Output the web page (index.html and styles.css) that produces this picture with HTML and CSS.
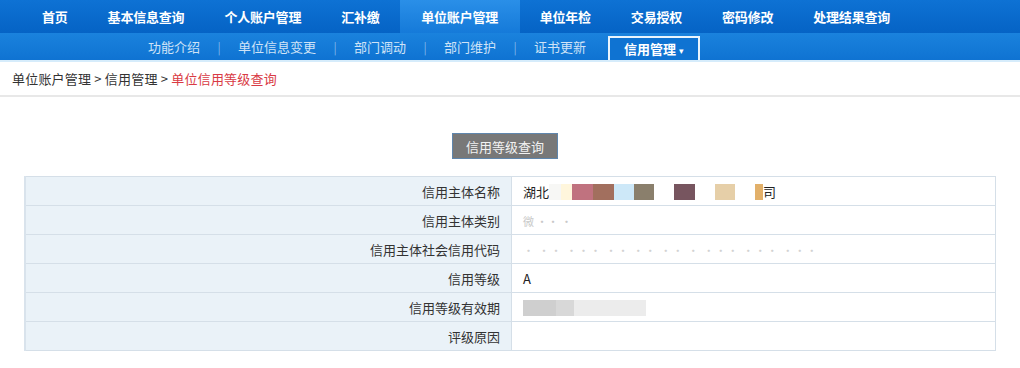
FILE: index.html
```html
<!DOCTYPE html>
<html lang="zh-CN">
<head>
  <meta charset="UTF-8">
  <title>单位信用等级查询</title>
  <link rel="stylesheet" href="styles.css">
</head>
<body>

<!-- Hauptnavigation -->
<div class="topnav">
  <a class="nav-item">首页</a>
  <a class="nav-item">基本信息查询</a>
  <a class="nav-item">个人账户管理</a>
  <a class="nav-item">汇补缴</a>
  <a class="nav-item nav-active">单位账户管理</a>
  <a class="nav-item">单位年检</a>
  <a class="nav-item">交易授权</a>
  <a class="nav-item">密码修改</a>
  <a class="nav-item">处理结果查询</a>
</div>

<!-- Unternavigation -->
<div class="subnav">
  <a class="sub-item">功能介绍</a><span class="sep">|</span>
  <a class="sub-item">单位信息变更</a><span class="sep">|</span>
  <a class="sub-item">部门调动</a><span class="sep">|</span>
  <a class="sub-item">部门维护</a><span class="sep">|</span>
  <a class="sub-item">证书更新</a>
  <a class="sub-item sub-active">信用管理 <span class="caret">▾</span></a>
</div>

<div class="crumbs">
  单位账户管理 &gt; 信用管理 &gt; <span class="crumb-current">单位信用等级查询</span>
</div>

<div class="content">
  <div class="actions">
    <button class="btn">信用等级查询</button>
  </div>

  <table class="info">
    <tr>
      <th>信用主体名称</th>
      <td>湖北<span class="blur b0"></span><span class="blur b1"></span><span class="blur b2"></span><span class="blur b3"></span><span class="blur b4"></span><span class="blur b5"></span><span class="gap"></span><span class="blur b6"></span><span class="gap"></span><span class="blur b7"></span><span class="gap"></span><span class="blur b8"></span>司</td>
    </tr>
    <tr>
      <th>信用主体类别</th>
      <td><span class="faint">微 ·· ·</span></td>
    </tr>
    <tr>
      <th>信用主体社会信用代码</th>
      <td><span class="faint faint-code">· ·· ··· ·· ·· ·· · ··· ··· ···</span></td>
    </tr>
    <tr>
      <th>信用等级</th>
      <td>A</td>
    </tr>
    <tr>
      <th>信用等级有效期</th>
      <td><span class="blur g1"></span><span class="blur g2"></span><span class="blur g3"></span></td>
    </tr>
    <tr>
      <th>评级原因</th>
      <td></td>
    </tr>
  </table>
</div>

</body>
</html>
```

FILE: styles.css
```css
/* =====================
   Grundlayout
   ===================== */
body {
  margin: 0;
  padding: 0;
  font-family: "Noto Sans CJK SC", "Liberation Sans", sans-serif;
  font-size: 13px;
  color: #333;
  background: #fff;
}

/* =====================
   Hauptnavigation
   ===================== */
.topnav {
  display: flex;
  height: 33px;
  padding-left: 22px;
  background: linear-gradient(#0e72d4, #0563c5);
}

.nav-item {
  display: flex;
  align-items: center;
  justify-content: center;
  padding: 0 20px;
  color: #fff;
  font-weight: bold;
  font-size: 13px;
  letter-spacing: -0.2px;
  cursor: pointer;
}

.nav-active {
  width: 120px;
  padding: 0;
  background: linear-gradient(#2a8fe8, #157ad9);
}

/* =====================
   Unternavigation
   ===================== */
.subnav {
  display: flex;
  align-items: flex-end;
  height: 27px;
  padding-left: 148px;
  background: linear-gradient(#1a82dd, #0f73d2);
  border-bottom: 2px solid #d6ecfb;
}

.sub-item {
  height: 24px;
  line-height: 22px;
  color: #cfe3f7;
  font-size: 13px;
  cursor: pointer;
}

.sep {
  height: 24px;
  line-height: 22px;
  width: 38px;
  text-align: center;
  color: #7fb6ea;
  font-size: 12px;
}

.sub-active {
  width: 88px;
  margin-left: 22px;
  height: 22px;
  text-align: center;
  color: #fff;
  font-weight: bold;
  background: #0f73d2;
  border: 2px solid #e9f4fd;
  border-bottom: none;
}

.caret {
  font-size: 9px;
  font-weight: normal;
}

/* =====================
   Brotkrumen
   ===================== */
.crumbs {
  height: 33px;
  line-height: 33px;
  padding-left: 12px;
  color: #333;
  letter-spacing: 0.2px;
  border-bottom: 2px solid #e8e8e8;
}

.crumb-current {
  color: #d93a44;
}

/* =====================
   Inhalt
   ===================== */
.content {
  padding: 36px 24px 0 24px;
}

.actions {
  display: flex;
  justify-content: center;
  margin-bottom: 17px;
  padding-right: 10px;
}

.btn {
  width: 106px;
  height: 26px;
  background: #787878;
  color: #f2f2f2;
  border: 1px solid #5f86ad;
  font-family: inherit;
  font-size: 13px;
  cursor: pointer;
}

.info {
  width: 972px;
  border-collapse: collapse;
}

.info th,
.info td {
  height: 28px;
  padding: 0;
  border: 1px solid #d5dfe8;
  font-weight: normal;
  font-size: 13px;
}

.info th {
  width: 474px;
  padding-right: 11px;
  text-align: right;
  background: #eaf2f8;
  border-left: 2px solid #d9e3ec;
}

.info td {
  padding-left: 11px;
  color: #222;
  background: #fff;
}

/* verpixelte Werte */
.blur {
  display: inline-block;
  height: 16px;
  vertical-align: -3px;
}

.gap {
  display: inline-block;
  width: 20px;
}

.b0 { width: 12px; background: #f7f7f5; }
.b1 { width: 11px; background: #fff6dc; }
.b2 { width: 21px; background: #c0727f; }
.b3 { width: 21px; background: #a26f5e; }
.b4 { width: 20px; background: #cde8f8; }
.b5 { width: 20px; background: #8a7f6c; }
.b6 { width: 21px; background: #77555f; }
.b7 { width: 20px; background: #e6cfa8; }
.b8 { width: 8px; background: #e2b06a; }

.g1 { width: 33px; background: #cfcfcf; }
.g2 { width: 18px; background: #d8d8d8; }
.g3 { width: 72px; background: #ececec; }

.faint {
  color: #c8c8c8;
  font-size: 11px;
}

.faint-code {
  color: #d2d2d2;
  letter-spacing: 1px;
}
```
